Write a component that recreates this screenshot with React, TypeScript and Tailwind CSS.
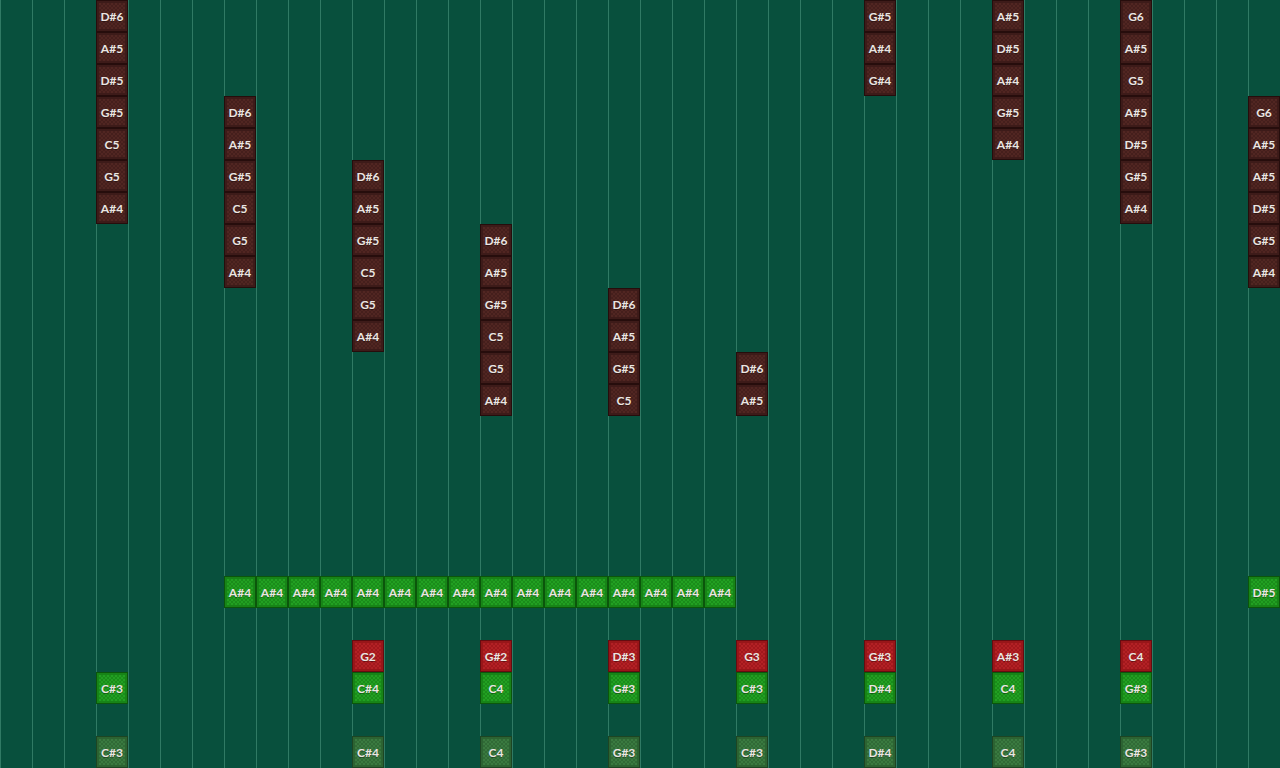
import React from 'react';

type Kind = 'lead' | 'bass' | 'pad' | 'ghost' | 'hold';

interface Note {
  col: number;
  row: number;
  name: string;
  kind: Kind;
}

// colour sets for each track kind: border, frame and checker squares
const kindClass: Record<Kind, { outer: string; inner: string }> = {
  lead: {
    outer: 'border-[#260d0c] bg-[#3d1b19]',
    inner: 'bg-[repeating-conic-gradient(#451f1c_0_25%,#512622_0_50%)]',
  },
  bass: {
    outer: 'border-[#650c10] bg-[#981619]',
    inner: 'bg-[repeating-conic-gradient(#a2181c_0_25%,#b32125_0_50%)]',
  },
  pad: {
    outer: 'border-[#0b560b] bg-[#178417]',
    inner: 'bg-[repeating-conic-gradient(#1a8c1a_0_25%,#22a022_0_50%)]',
  },
  hold: {
    outer: 'border-[#0b560b] bg-[#178417]',
    inner: 'bg-[repeating-conic-gradient(#1a8c1a_0_25%,#22a022_0_50%)]',
  },
  ghost: {
    outer: 'border-[#1d4523] bg-[#2c6332]',
    inner: 'bg-[repeating-conic-gradient(#306a36_0_25%,#3a7a40_0_50%)]',
  },
};

const stack = (col: number, top: number, names: string[]): Note[] =>
  names.map((name, i) => ({ col, row: top + i, name, kind: 'lead' as Kind }));

const chord = (col: number, bass: string | null, pad: string): Note[] => {
  const out: Note[] = [];
  if (bass) out.push({ col, row: 20, name: bass, kind: 'bass' });
  out.push({ col, row: 21, name: pad, kind: 'pad' });
  out.push({ col, row: 23, name: pad, kind: 'ghost' });
  return out;
};

const notes: Note[] = [
  ...stack(3, 0, ['D#6', 'A#5', 'D#5', 'G#5', 'C5', 'G5', 'A#4']),
  ...stack(7, 3, ['D#6', 'A#5', 'G#5', 'C5', 'G5', 'A#4']),
  ...stack(11, 5, ['D#6', 'A#5', 'G#5', 'C5', 'G5', 'A#4']),
  ...stack(15, 7, ['D#6', 'A#5', 'G#5', 'C5', 'G5', 'A#4']),
  ...stack(19, 9, ['D#6', 'A#5', 'G#5', 'C5']),
  ...stack(23, 11, ['D#6', 'A#5']),
  ...stack(27, 0, ['G#5', 'A#4', 'G#4']),
  ...stack(31, 0, ['A#5', 'D#5', 'A#4', 'G#5', 'A#4']),
  ...stack(35, 0, ['G6', 'A#5', 'G5', 'A#5', 'D#5', 'G#5', 'A#4']),
  ...stack(39, 3, ['G6', 'A#5', 'A#5', 'D#5', 'G#5', 'A#4']),
  ...Array.from({ length: 16 }, (_, i) => ({ col: 7 + i, row: 18, name: 'A#4', kind: 'hold' as Kind })),
  { col: 39, row: 18, name: 'D#5', kind: 'hold' },
  ...chord(3, null, 'C#3'),
  ...chord(11, 'G2', 'C#4'),
  ...chord(15, 'G#2', 'C4'),
  ...chord(19, 'D#3', 'G#3'),
  ...chord(23, 'G3', 'C#3'),
  ...chord(27, 'G#3', 'D#4'),
  ...chord(31, 'A#3', 'C4'),
  ...chord(35, 'C4', 'G#3'),
];

const NoteCell = ({ note }: { note: Note }) => {
  const c = kindClass[note.kind];
  return (
    <div
      className={`relative border ${c.outer} p-[2px]`}
      style={{ gridColumn: note.col + 1, gridRow: note.row + 1 }}
    >
      <div className={`h-full w-full ${c.inner} bg-[length:4px_4px]`} />
      <span className="absolute inset-0 flex items-center justify-center pt-[1px] text-[12px] font-bold text-[#ebe6e2] [text-shadow:0_1px_0_rgba(0,0,0,0.35)]">
        {note.name}
      </span>
    </div>
  );
};

export default function App() {
  return (
    <div
      className="h-[768px] w-[1280px] overflow-hidden bg-[#08503d] bg-[linear-gradient(to_right,#307a64_1px,transparent_1px)] bg-[length:32px_100%]"
      style={{ fontFamily: 'Lato, "Open Sans", sans-serif' }}
    >
      <div className="grid grid-cols-[repeat(40,32px)] grid-rows-[repeat(24,32px)]">
        {notes.map((n, i) => (
          <NoteCell key={i} note={n} />
        ))}
      </div>
    </div>
  );
}
